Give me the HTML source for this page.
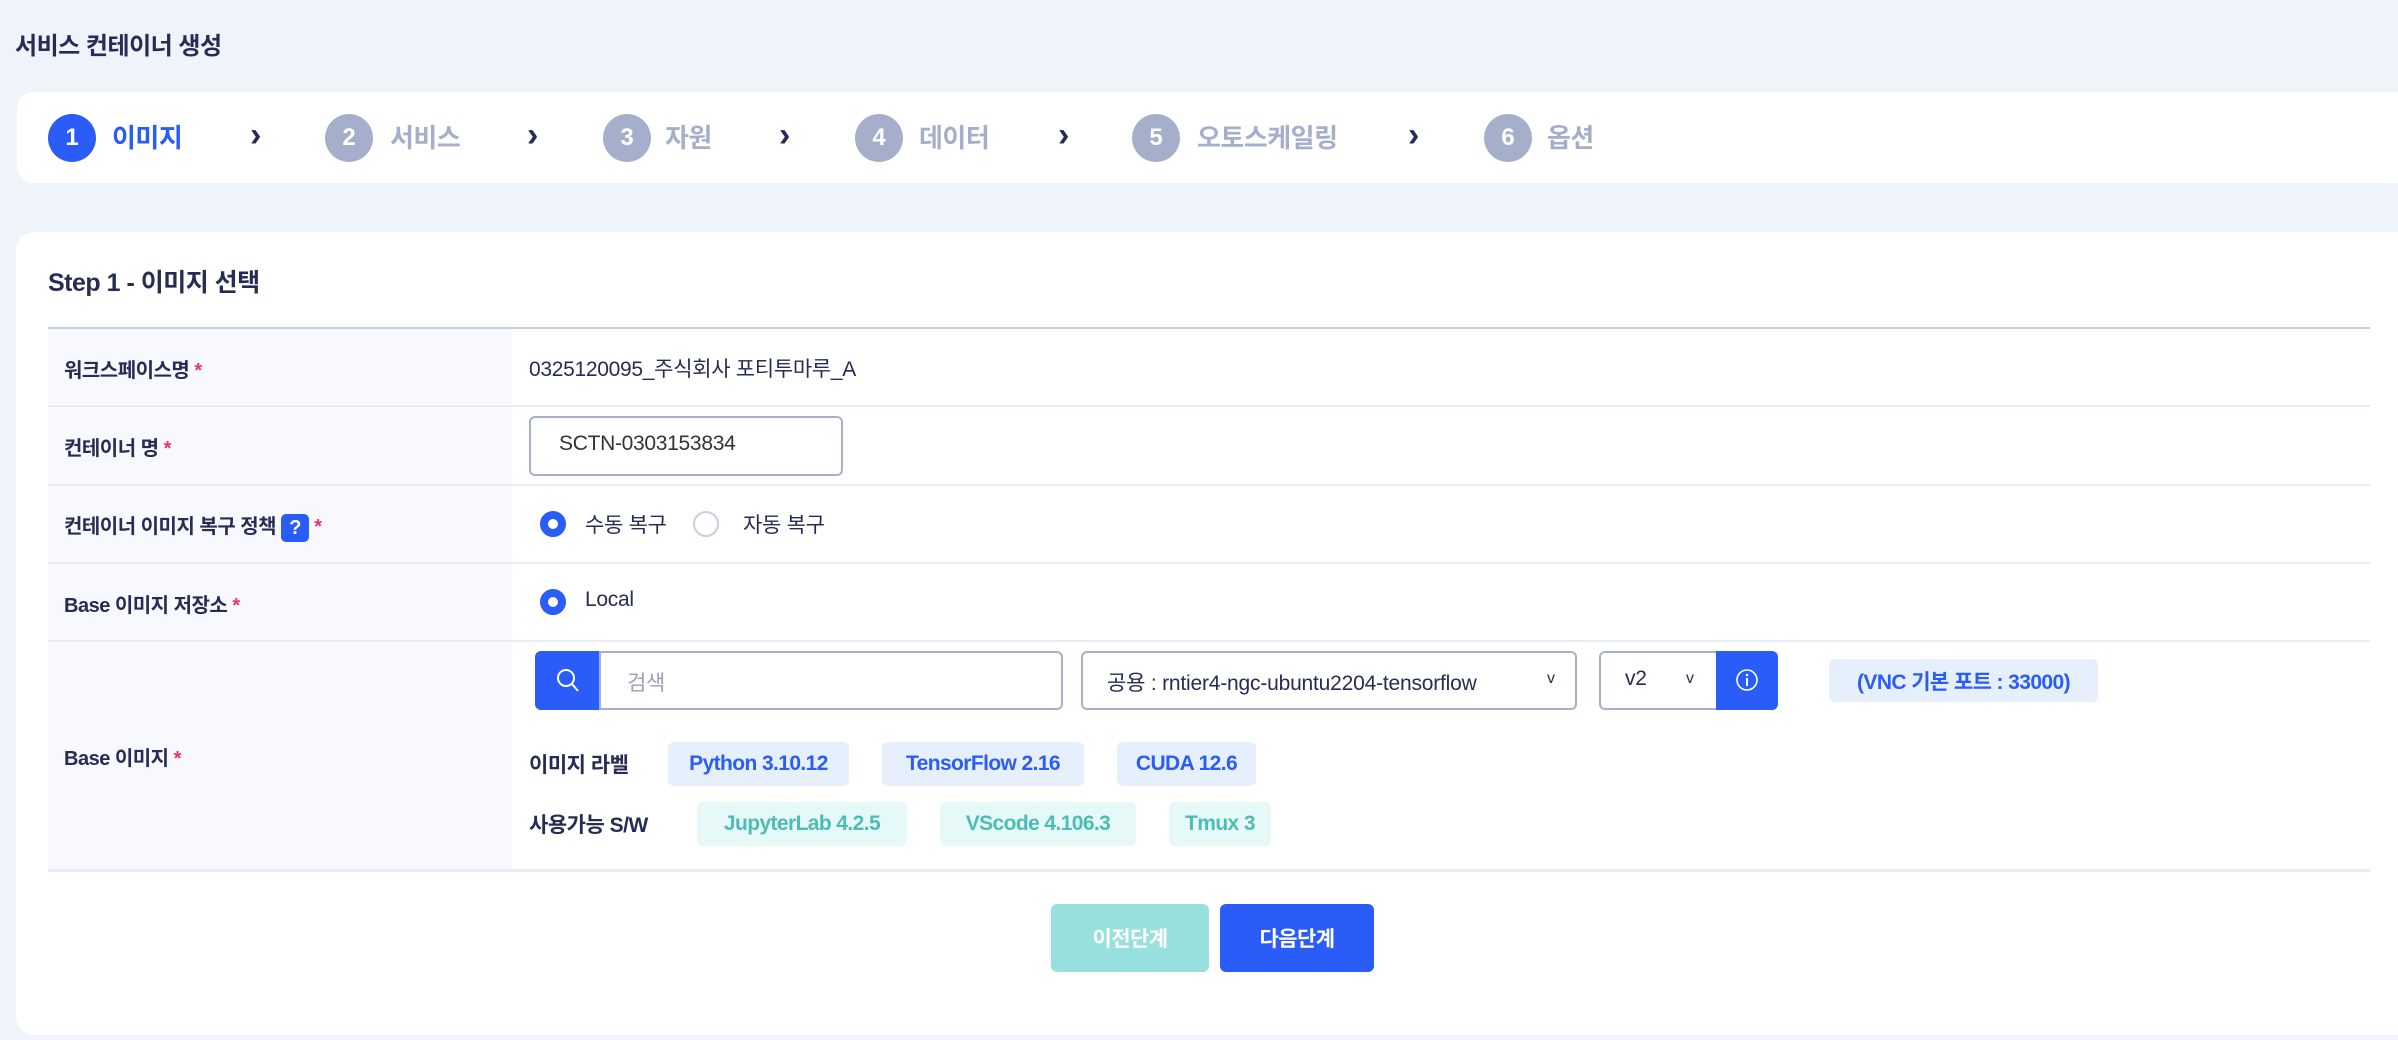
<!DOCTYPE html>
<html><head><meta charset="utf-8"><style>
*{box-sizing:border-box;margin:0;padding:0}
body{width:2398px;height:1040px;background:#eff3fa;font-family:"Liberation Sans","Noto Sans CJK KR",sans-serif;color:#272c55;position:relative;overflow:hidden}
.a{position:absolute}
.title{left:15px;top:26px;font-size:24px;font-weight:700;letter-spacing:-.5px}
.stepcard{left:17px;top:92px;width:2400px;height:91px;background:#fff;border-radius:16px}
.c{width:48px;height:48px;border-radius:50%;background:#a5aecb;color:#fff;font-size:24px;font-weight:700;display:flex;align-items:center;justify-content:center;top:114px}
.sl{top:119px;font-size:26px;font-weight:700;color:#a5aecb;line-height:38px;letter-spacing:-.5px}
.ch{top:116px;font-size:34px;font-weight:700;color:#272c55}
.main{left:16px;top:232px;width:2400px;height:803px;background:#fff;border-radius:18px}
.h2{left:48px;top:263px;font-size:25px;font-weight:700;letter-spacing:-.5px}
.lab{left:48px;width:464px;background:#f7f9fe}
.line{left:48px;width:2322px;height:2px;background:#e8ecf5}
.lt{left:64px;font-size:20px;font-weight:700;letter-spacing:-.5px}
.st{color:#e8356d}
.v{font-size:21px;letter-spacing:-.3px}
.radio{width:26px;height:26px;border-radius:50%;border:8px solid #2a5cf7;background:#fff}
.radio.off{border:2px solid #c9cfe3}
.badge{height:44px;border-radius:6px;font-size:21px;font-weight:700;letter-spacing:-.6px;display:flex;align-items:center;justify-content:center}
.bb{background:#e6effc;color:#2a5cf7}
.tb{background:#e6f9f8;color:#4cbdb4}
.box{border:2px solid #a9b0cc;border-radius:6px;background:#fff}
</style></head><body>
<div class="a title">서비스 컨테이너 생성</div>
<div class="a stepcard"></div>
<div class="a c" style="left:48px;background:#2a5cf7">1</div><div class="a sl" style="left:112px;color:#2a5cf7">이미지</div><div class="a ch" style="left:250px">›</div>
<div class="a c" style="left:325px">2</div><div class="a sl" style="left:390px">서비스</div><div class="a ch" style="left:527px">›</div>
<div class="a c" style="left:603px">3</div><div class="a sl" style="left:665px">자원</div><div class="a ch" style="left:779px">›</div>
<div class="a c" style="left:855px">4</div><div class="a sl" style="left:919px">데이터</div><div class="a ch" style="left:1058px">›</div>
<div class="a c" style="left:1132px">5</div><div class="a sl" style="left:1197px">오토스케일링</div><div class="a ch" style="left:1408px">›</div>
<div class="a c" style="left:1484px">6</div><div class="a sl" style="left:1547px">옵션</div>

<div class="a main"></div>
<div class="a h2">Step 1 - 이미지 선택</div>
<div class="a lab" style="top:328px;height:543px"></div>
<div class="a" style="left:48px;top:327px;width:2322px;height:2px;background:#c5d0ea"></div>
<div class="a line" style="top:405px"></div>
<div class="a line" style="top:484px"></div>
<div class="a line" style="top:562px"></div>
<div class="a line" style="top:640px"></div>
<div class="a line" style="top:869px;height:3px"></div>

<div class="a lt" style="top:354px">워크스페이스명 <span class="st">*</span></div>
<div class="a v" style="left:529px;top:353px">0325120095_주식회사 포티투마루_A</div>

<div class="a lt" style="top:432px">컨테이너 명 <span class="st">*</span></div>
<div class="a box" style="left:529px;top:416px;width:314px;height:60px"></div>
<div class="a v" style="left:559px;top:432px;color:#333">SCTN-0303153834</div>

<div class="a lt" style="top:510px">컨테이너 이미지 복구 정책 <span style="display:inline-block;width:28px;height:28px;background:#2a5cf7;color:#fff;border-radius:5px;text-align:center;line-height:28px;vertical-align:middle">?</span> <span class="st">*</span></div>
<div class="a radio" style="left:540px;top:511px"></div>
<div class="a v" style="left:585px;top:509px">수동 복구</div>
<div class="a radio off" style="left:693px;top:511px"></div>
<div class="a v" style="left:743px;top:509px">자동 복구</div>

<div class="a lt" style="top:589px">Base 이미지 저장소 <span class="st">*</span></div>
<div class="a radio" style="left:540px;top:589px"></div>
<div class="a v" style="left:585px;top:588px">Local</div>

<div class="a lt" style="top:742px">Base 이미지 <span class="st">*</span></div>
<div class="a" style="left:535px;top:651px;width:66px;height:59px;background:#2a5cf7;border-radius:6px 0 0 6px"></div>
<svg class="a" style="left:554px;top:667px" width="28" height="28" viewBox="0 0 28 28"><circle cx="12" cy="11" r="8" fill="none" stroke="#fff" stroke-width="2"/><path d="M18 17l6 7" stroke="#fff" stroke-width="2"/></svg>
<div class="a box" style="left:599px;top:651px;width:464px;height:59px;border-radius:0 6px 6px 0"></div>
<div class="a v" style="left:627px;top:667px;color:#9aa0b4">검색</div>
<div class="a box" style="left:1081px;top:651px;width:496px;height:59px"></div>
<div class="a v" style="left:1107px;top:667px;width:410px;overflow:hidden;white-space:nowrap;letter-spacing:-.2px">공용 : rntier4-ngc-ubuntu2204-tensorflow</div>
<div class="a" style="left:1547px;top:670px;font-size:16px">v</div>
<div class="a box" style="left:1599px;top:651px;width:126px;height:59px"></div>
<div class="a v" style="left:1625px;top:667px">v2</div>
<div class="a" style="left:1686px;top:670px;font-size:16px">v</div>
<div class="a" style="left:1716px;top:651px;width:62px;height:59px;background:#2a5cf7;border-radius:0 6px 6px 0"></div>
<svg class="a" style="left:1735px;top:668px" width="24" height="24" viewBox="0 0 24 24"><circle cx="12" cy="12" r="10" fill="none" stroke="#fff" stroke-width="1.6"/><circle cx="12" cy="7" r="1.3" fill="#fff"/><path d="M12 10v8" stroke="#fff" stroke-width="2"/></svg>
<div class="a badge bb" style="left:1829px;top:659px;width:269px;height:43px">(VNC 기본 포트 : 33000)</div>

<div class="a" style="left:529px;top:749px;font-size:21px;font-weight:700;letter-spacing:-.5px">이미지 라벨</div>
<div class="a badge bb" style="left:668px;top:742px;width:181px">Python 3.10.12</div>
<div class="a badge bb" style="left:882px;top:742px;width:202px">TensorFlow 2.16</div>
<div class="a badge bb" style="left:1117px;top:742px;width:139px">CUDA 12.6</div>
<div class="a" style="left:529px;top:809px;font-size:21px;font-weight:700;letter-spacing:-.5px">사용가능 S/W</div>
<div class="a badge tb" style="left:697px;top:802px;width:210px">JupyterLab 4.2.5</div>
<div class="a badge tb" style="left:940px;top:802px;width:196px">VScode 4.106.3</div>
<div class="a badge tb" style="left:1169px;top:802px;width:102px">Tmux 3</div>

<div class="a badge" style="left:1051px;top:904px;width:158px;height:68px;background:#98e0de;color:#fff">이전단계</div>
<div class="a badge" style="left:1220px;top:904px;width:154px;height:68px;background:#2a5cf7;color:#fff">다음단계</div>
</body></html>
